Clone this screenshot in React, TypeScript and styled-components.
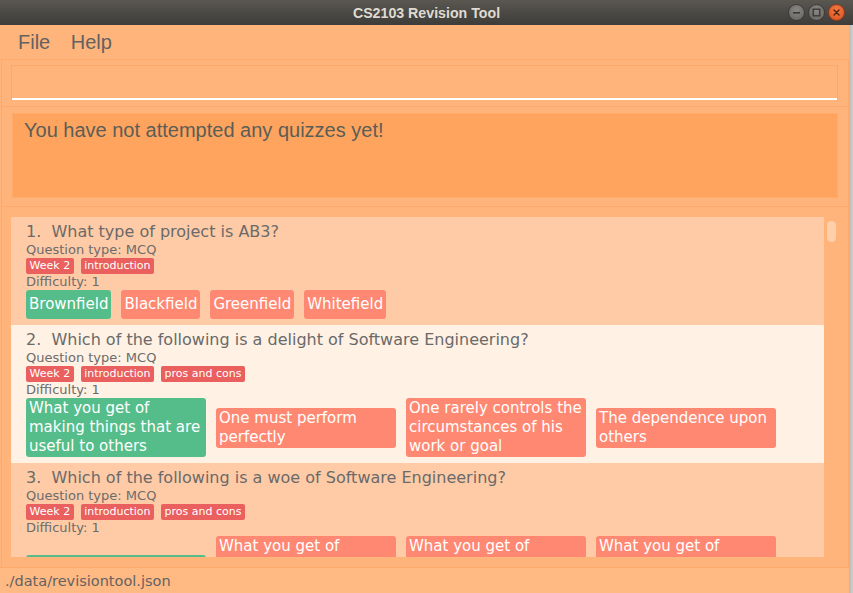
import React from "react";
import styled, { createGlobalStyle } from "styled-components";

// Shape of one quiz question in the list.
interface Option {
  text: string;
  correct?: boolean;
}

interface Question {
  title: string;
  type: string;
  tags: string[];
  difficulty: number;
  options: Option[];
}

const questions: Question[] = [
  {
    title: "What type of project is AB3?",
    type: "MCQ",
    tags: ["Week 2", "introduction"],
    difficulty: 1,
    options: [
      { text: "Brownfield", correct: true },
      { text: "Blackfield" },
      { text: "Greenfield" },
      { text: "Whitefield" },
    ],
  },
  {
    title: "Which of the following is a delight of Software Engineering?",
    type: "MCQ",
    tags: ["Week 2", "introduction", "pros and cons"],
    difficulty: 1,
    options: [
      { text: "What you get of making things that are useful to others", correct: true },
      { text: "One must perform perfectly" },
      { text: "One rarely controls the circumstances of his work or goal" },
      { text: "The dependence upon others" },
    ],
  },
  {
    title: "Which of the following is a woe of Software Engineering?",
    type: "MCQ",
    tags: ["Week 2", "introduction", "pros and cons"],
    difficulty: 1,
    options: [
      { text: "One must perform perfectly", correct: true },
      { text: "What you get of making things that are useful to others every day" },
      { text: "What you get of making things that are useful to others at work" },
      { text: "What you get of making things that are useful to others in the world" },
    ],
  },
];

const GlobalStyle = createGlobalStyle`
  html, body {
    margin: 0;
    padding: 0;
    width: 853px;
    height: 593px;
    overflow: hidden;
    background: #c6c6c4;
  }
  * {
    box-sizing: border-box;
  }
`;

const Screen = styled.div`
  width: 853px;
  height: 593px;
  display: flex;
  flex-direction: column;
`;

// Ubuntu-style window title bar.
const TitleBar = styled.div`
  height: 25px;
  flex: none;
  display: grid;
  grid-template-columns: 1fr auto 1fr;
  align-items: center;
  background: linear-gradient(#5a5751, #3d3c38);
  color: #dfdbd2;
  font-family: "Liberation Sans", Arial, sans-serif;
  font-weight: bold;
  font-size: 14.2px;
`;

const TitleText = styled.span`
  grid-column: 2;
  padding-top: 1px;
`;

const Controls = styled.div`
  grid-column: 3;
  justify-self: end;
  display: flex;
  gap: 3px;
  padding-right: 8px;
`;

const ControlButton = styled.div<{ $close?: boolean }>`
  width: 17px;
  height: 17px;
  border-radius: 50%;
  display: flex;
  align-items: center;
  justify-content: center;
  border: 1px solid ${({ $close }) => ($close ? "#8a3a1c" : "#3b3a36")};
  background: ${({ $close }) =>
    $close
      ? "radial-gradient(circle at 50% 35%, #f27a45, #dc4f1c)"
      : "radial-gradient(circle at 50% 35%, #8a8884, #64625e)"};
`;

const Body = styled.div`
  flex: 1;
  display: flex;
  min-height: 0;
`;

const Window = styled.div`
  width: 849px;
  display: flex;
  flex-direction: column;
  background: #ffb47c;
`;

const RightEdge = styled.div`
  width: 4px;
  background: linear-gradient(90deg, #b9b9b7, #cfcfcd);
`;

const MenuBar = styled.div`
  height: 34px;
  flex: none;
  display: flex;
  align-items: center;
  padding-left: 8px;
  font-family: "Liberation Sans", Arial, sans-serif;
  font-size: 20px;
  color: #626262;
`;

const MenuItem = styled.span`
  padding: 0 10.5px 0 10px;
`;

const Section = styled.div<{ $pad: string; $grow?: boolean }>`
  margin-left: 1px;
  border: 1px solid #ffa96c;
  border-bottom: none;
  padding: ${({ $pad }) => $pad};
  flex: ${({ $grow }) => ($grow ? "1" : "none")};
  display: flex;
  flex-direction: column;
  min-height: 0;
`;

const CommandField = styled.div`
  height: 35px;
  border: 1px solid #ffa866;
  border-bottom: none;
  box-shadow: inset 0 -2px 0 #ffffff;
`;

const ResultBox = styled.div`
  height: 85px;
  background: #ffa45e;
  border: 1px solid #ffac6b;
  padding: 5px 11px;
  font-family: "Liberation Sans", Arial, sans-serif;
  font-size: 20px;
  color: #5a5e57;
`;

const ListView = styled.div`
  height: 340px;
  display: flex;
  overflow: hidden;
`;

const ListColumn = styled.div`
  width: 813px;
  display: flex;
  flex-direction: column;
  overflow: hidden;
`;

const ScrollTrack = styled.div`
  width: 14px;
  padding: 4px 2px 0 3px;
`;

const ScrollThumb = styled.div`
  width: 9px;
  height: 21px;
  border-radius: 5px;
  background: #ffcfaa;
`;

const Card = styled.div<{ $alt: boolean }>`
  flex: none;
  background: ${({ $alt }) => ($alt ? "#fff1e3" : "#ffcba6")};
  padding: 5px 15px 6px 15px;
  font-family: "DejaVu Sans", Verdana, sans-serif;
  color: #6a6a6a;
`;

const CardTitle = styled.div`
  font-size: 16px;
  line-height: 19px;
  white-space: pre-wrap;
`;

const Meta = styled.div<{ $lh: number }>`
  font-size: 13px;
  line-height: ${({ $lh }) => $lh}px;
  color: #6c6c6c;
`;

const TagRow = styled.div`
  display: flex;
  gap: 7px;
  height: 16px;
`;

const Tag = styled.span`
  background: #e9605e;
  color: #ffffff;
  font-size: 11px;
  line-height: 16px;
  padding: 0 3.5px;
  border-radius: 2px;
`;

const OptionRow = styled.div`
  display: flex;
  align-items: center;
  gap: 10px;
`;

const OptionBox = styled.div<{ $correct?: boolean }>`
  max-width: 180px;
  min-height: 29px;
  display: flex;
  align-items: center;
  padding: 1px 3px;
  border-radius: 3px;
  background: ${({ $correct }) => ($correct ? "#55bd8a" : "#ff8872")};
  color: #ffffff;
  font-size: 15px;
  line-height: 19px;
`;

const StatusBar = styled.div`
  height: 26px;
  flex: none;
  border-top: 1px solid #ffa96c;
  background: #ffb983;
  display: flex;
  align-items: center;
  padding-left: 5px;
  font-family: "DejaVu Sans", Verdana, sans-serif;
  font-size: 14.5px;
  color: #636363;
`;

const QuestionCard: React.FC<{ q: Question; index: number }> = ({ q, index }) => (
  <Card $alt={index % 2 === 1}>
    <CardTitle>{`${index + 1}.  ${q.title}`}</CardTitle>
    <Meta $lh={17}>Question type: {q.type}</Meta>
    <TagRow>
      {q.tags.map((t) => (
        <Tag key={t}>{t}</Tag>
      ))}
    </TagRow>
    <Meta $lh={16}>Difficulty: {q.difficulty}</Meta>
    <OptionRow>
      {q.options.map((o, i) => (
        <OptionBox key={i} $correct={o.correct}>
          {o.text}
        </OptionBox>
      ))}
    </OptionRow>
  </Card>
);

export default function App() {
  return (
    <>
      <GlobalStyle />
      <Screen>
        <TitleBar>
          <TitleText>CS2103 Revision Tool</TitleText>
          <Controls>
            <ControlButton>
              <svg width="9" height="9" viewBox="0 0 9 9">
                <rect x="1" y="4" width="7" height="1.6" fill="#3a3935" />
              </svg>
            </ControlButton>
            <ControlButton>
              <svg width="9" height="9" viewBox="0 0 9 9">
                <rect x="1.2" y="1.2" width="6.6" height="6.6" fill="none" stroke="#3a3935" strokeWidth="1.4" />
              </svg>
            </ControlButton>
            <ControlButton $close>
              <svg width="9" height="9" viewBox="0 0 9 9">
                <path d="M2 2 L7 7 M7 2 L2 7" stroke="#4a2212" strokeWidth="1.4" strokeLinecap="round" />
              </svg>
            </ControlButton>
          </Controls>
        </TitleBar>
        <Body>
          <Window>
            <MenuBar>
              <MenuItem>File</MenuItem>
              <MenuItem>Help</MenuItem>
            </MenuBar>
            <Section $pad="5px 10px 6px 9px">
              <CommandField />
            </Section>
            <Section $pad="6px 10px 8px 10px">
              <ResultBox>You have not attempted any quizzes yet!</ResultBox>
            </Section>
            <Section $pad="10px 10px 10px 9px" $grow>
              <ListView>
                <ListColumn>
                  {questions.map((q, i) => (
                    <QuestionCard key={i} q={q} index={i} />
                  ))}
                </ListColumn>
                <ScrollTrack>
                  <ScrollThumb />
                </ScrollTrack>
              </ListView>
            </Section>
            <StatusBar>./data/revisiontool.json</StatusBar>
          </Window>
          <RightEdge />
        </Body>
      </Screen>
    </>
  );
}
